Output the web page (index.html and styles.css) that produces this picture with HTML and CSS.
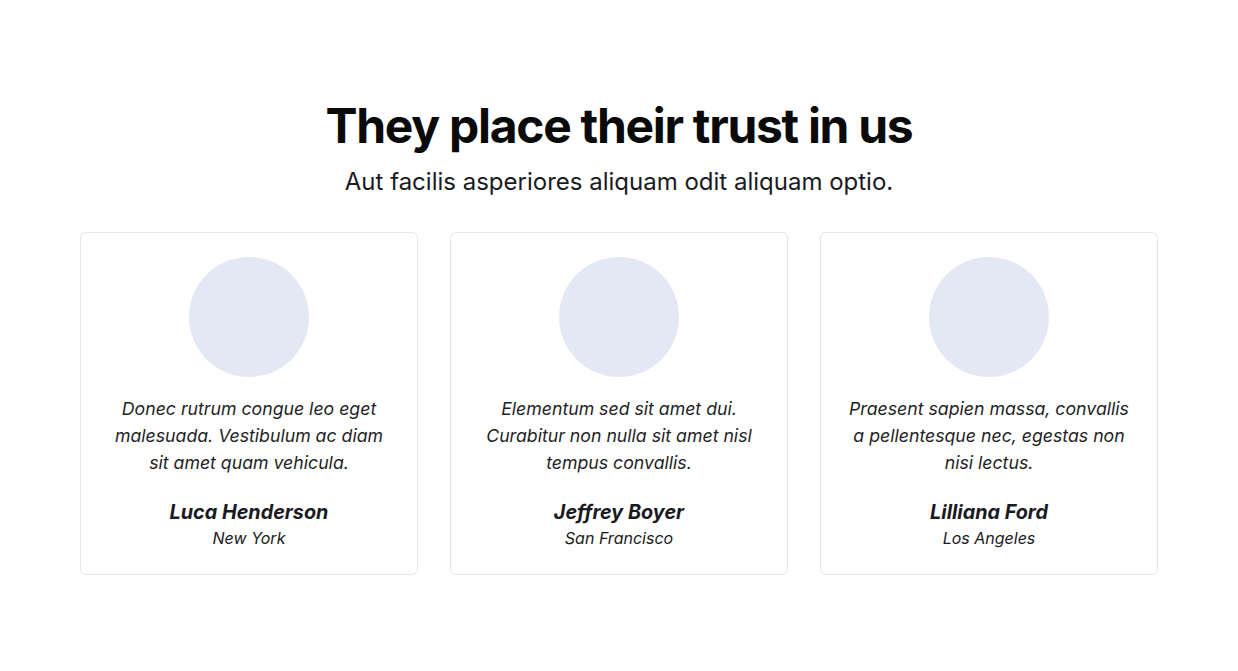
FILE: index.html
```html
<!DOCTYPE html>
<html lang="en">
<head>
<meta charset="utf-8">
<title>Testimonials</title>
<link rel="stylesheet" href="styles.css">
</head>
<body>
<section class="section">
  <h1 class="title">They place their trust in us</h1>
  <p class="subtitle">Aut facilis asperiores aliquam odit aliquam optio.</p>
  <div class="cards">
    <div class="card">
      <div class="avatar"></div>
      <p class="quote">Donec rutrum congue leo eget malesuada. Vestibulum ac diam sit amet quam vehicula.</p>
      <p class="name">Luca Henderson</p>
      <p class="city">New York</p>
    </div>
    <div class="card">
      <div class="avatar"></div>
      <p class="quote">Elementum sed sit amet dui. Curabitur non nulla sit amet nisl tempus convallis.</p>
      <p class="name">Jeffrey Boyer</p>
      <p class="city">San Francisco</p>
    </div>
    <div class="card">
      <div class="avatar"></div>
      <p class="quote">Praesent sapien massa, convallis a pellentesque nec, egestas non nisi lectus.</p>
      <p class="name">Lilliana Ford</p>
      <p class="city">Los Angeles</p>
    </div>
  </div>
</section>
</body>
</html>
```

FILE: styles.css
```css
* { box-sizing: border-box; }
html, body { margin: 0; padding: 0; background: #ffffff; }
body { font-family: Inter, "Noto Sans", sans-serif; color: #111111; }
.section {
  width: 1078px;
  margin: 0 auto;
  padding-top: 98px;
  display: flex;
  flex-direction: column;
  align-items: center;
}
.title {
  margin: 0;
  font-size: 48px;
  line-height: 56px;
  font-weight: 700;
  letter-spacing: -0.027em;
  color: #0a0a0a;
}
.subtitle {
  margin: 12px 0 0;
  font-size: 24px;
  line-height: 32px;
  color: #1a1a1f;
}
.cards {
  margin-top: 34px;
  width: 100%;
  display: grid;
  grid-template-columns: repeat(3, 1fr);
  gap: 32px;
}
.card {
  border: 1px solid #e6e6ea;
  border-radius: 6px;
  padding: 24px 25px 24px;
  display: flex;
  flex-direction: column;
  align-items: center;
  text-align: center;
}
.avatar {
  width: 120px;
  height: 120px;
  border-radius: 50%;
  background: #e2e8f4;
}
.quote {
  margin: 18px 0 0;
  font-size: 17.7px;
  line-height: 27px;
  font-style: italic;
  color: #1f1f26;
}
.name {
  margin: 22px 0 0;
  font-size: 19.8px;
  line-height: 28px;
  font-weight: 700;
  font-style: italic;
  color: #1a1a22;
}
.city {
  margin: 0;
  font-size: 16px;
  line-height: 24px;
  font-style: italic;
  color: #1a1a22;
}
```
